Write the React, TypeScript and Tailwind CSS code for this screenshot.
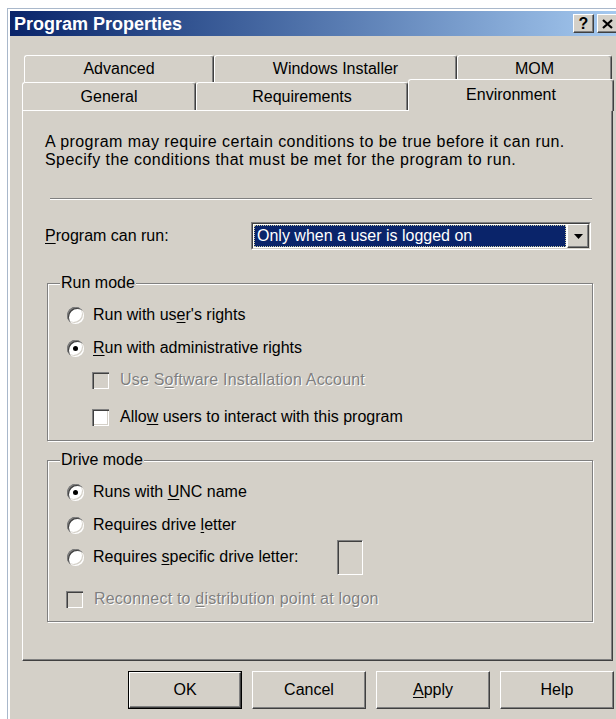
import React from "react";

// Classic 3D bevels used throughout the dialog
const raised =
  "border border-t-white border-l-white border-r-[#404040] border-b-[#404040] shadow-[inset_-1px_-1px_0_#808080]";
const disabledText = "text-[#808080] tracking-[0.2px] [text-shadow:1px_1px_0_#fff]";

function CaptionButton({ children }: { children: React.ReactNode }) {
  return (
    <div className={`flex h-[19px] w-[21px] items-center justify-center bg-[#d4d0c8] ${raised}`}>
      {children}
    </div>
  );
}

function Tab({
  label,
  className,
  active,
}: {
  label: string;
  className: string;
  active?: boolean;
}) {
  return (
    <div
      className={`flex shrink-0 items-center justify-center rounded-t-[3px] border-l border-t border-r border-l-white border-t-white border-r-[#404040] bg-[#d4d0c8] shadow-[inset_-1px_0_0_#808080] ${
        active ? "relative z-10 self-start" : ""
      } ${className}`}
    >
      {label}
    </div>
  );
}

function Radio({ checked }: { checked?: boolean }) {
  return (
    <span className="flex h-[17px] w-[17px] shrink-0 items-center justify-center rounded-full bg-white shadow-[inset_1px_1px_0_#808080,inset_2px_2px_0_#404040,inset_-1px_-1px_0_#fff,inset_-2px_-2px_0_#d4d0c8]">
      {checked && <span className="h-[5px] w-[5px] rounded-full bg-black" />}
    </span>
  );
}

function Check({ disabled }: { disabled?: boolean }) {
  return (
    <span
      className={`h-[17px] w-[17px] shrink-0 shadow-[inset_1px_1px_0_#808080,inset_2px_2px_0_#404040,inset_-1px_-1px_0_#fff,inset_-2px_-2px_0_#d4d0c8] ${
        disabled ? "bg-[#d4d0c8]" : "bg-white"
      }`}
    />
  );
}

function GroupBox({
  title,
  className,
  children,
}: {
  title: string;
  className: string;
  children: React.ReactNode;
}) {
  return (
    <div
      className={`ml-[2px] w-[546px] border border-[#808080] shadow-[inset_1px_1px_0_#fff,1px_1px_0_#fff] ${className}`}
    >
      <div className="-mt-[10px] ml-[12px] w-fit bg-[#d4d0c8] px-[1px] leading-[18px]">{title}</div>
      {children}
    </div>
  );
}

function Button({ children, isDefault }: { children: React.ReactNode; isDefault?: boolean }) {
  const face = (
    <div className={`flex h-full w-full items-center justify-center bg-[#d4d0c8] ${raised}`}>
      {children}
    </div>
  );
  return isDefault ? (
    <div className="h-[38px] w-[114px] border border-black">{face}</div>
  ) : (
    <div className="h-[38px] w-[114px]">{face}</div>
  );
}

export default function App() {
  return (
    <div className="h-[719px] w-[616px] overflow-hidden bg-white pl-[7px] pt-[8px] font-['Liberation_Sans',Arial,sans-serif] text-[16px] text-black">
      <div className="h-[720px] w-[617px] border-l border-t border-[#a9b8cb] bg-[#d4d0c8] shadow-[inset_1px_1px_0_#fff,inset_2px_2px_0_#fff]">
        <div className="pl-[2px] pr-[4px] pt-[2px]">
          {/* caption bar */}
          <div className="flex h-[25px] items-center bg-gradient-to-r from-[#0a246a] to-[#a6caf0] pl-[4px] pr-[2px]">
            <span className="text-[18px] font-bold leading-none text-white">Program Properties</span>
            <div className="ml-auto flex gap-[3px]">
              <CaptionButton>
                <span className="text-[16px] font-bold leading-none">?</span>
              </CaptionButton>
              <CaptionButton>
                <svg width="11" height="10" viewBox="0 0 11 10">
                  <path d="M1 1 L10 9 M10 1 L1 9" stroke="#000" strokeWidth="2.2" />
                </svg>
              </CaptionButton>
            </div>
          </div>

          <div className="pl-[12px] pt-[19px]">
            {/* tab rows */}
            <div className="ml-[2px] flex h-[27px]">
              <Tab label="Advanced" className="h-[27px] w-[190px]" />
              <Tab label="Windows Installer" className="h-[27px] w-[243px]" />
              <Tab label="MOM" className="h-[27px] w-[155px]" />
            </div>
            <div className="-mt-[3px] flex h-[31px] items-end">
              <Tab label="General" className="h-[28px] w-[174px]" />
              <Tab label="Requirements" className="h-[28px] w-[212px]" />
              <Tab label="Environment" className="h-[32px] w-[206px] pb-[2px]" active />
            </div>

            {/* tab page */}
            <div className="h-[551px] w-[591px] border border-white border-r-[#404040] border-b-[#404040] shadow-[inset_-1px_-1px_0_#808080]">
              <div className="pl-[22px] pt-[22px]">
                <p className="leading-[18px] tracking-[0.45px]">
                  A program may require certain conditions to be true before it can run.
                  <br />
                  Specify the conditions that must be met for the program to run.
                </p>

                <div className="ml-[5px] mt-[29px] h-[2px] w-[542px] border-t border-b border-t-[#808080] border-b-white" />

                <div className="mt-[22px] flex h-[28px] items-center">
                  <span className="w-[206px]">
                    <u className="underline-offset-2">P</u>rogram can run:
                  </span>
                  <div className="flex h-[28px] w-[340px] border border-t-[#808080] border-l-[#808080] border-r-white border-b-white">
                    <div className="flex flex-1 border border-t-[#404040] border-l-[#404040] border-r-[#d4d0c8] border-b-[#d4d0c8] bg-white">
                      <div className="m-[1px] flex flex-1 items-center border border-dotted border-[#c8c8a0] bg-[#0a246a] pl-[2px] leading-none text-white">
                        Only when a user is logged on
                      </div>
                      <div className={`flex w-[22px] items-center justify-center bg-[#d4d0c8] ${raised}`}>
                        <svg width="9" height="5" viewBox="0 0 9 5">
                          <path d="M0 0 H9 L4.5 5 Z" fill="#000" />
                        </svg>
                      </div>
                    </div>
                  </div>
                </div>

                <GroupBox title="Run mode" className="mt-[33px] h-[158px]">
                  <div className="mt-[11px] flex h-[24px] items-center gap-[9px] pl-[19px]">
                    <Radio />
                    <span>
                      Run with us<u className="underline-offset-2">e</u>r's rights
                    </span>
                  </div>
                  <div className="mt-[9px] flex h-[24px] items-center gap-[9px] pl-[19px]">
                    <Radio checked />
                    <span>
                      <u className="underline-offset-2">R</u>un with administrative rights
                    </span>
                  </div>
                  <div className="mt-[8px] flex h-[24px] items-center gap-[11px] pl-[44px]">
                    <Check disabled />
                    <span className={disabledText}>
                      Use S<u className="underline-offset-2">o</u>ftware Installation Account
                    </span>
                  </div>
                  <div className="mt-[13px] flex h-[24px] items-center gap-[11px] pl-[44px]">
                    <Check />
                    <span>
                      Allo<u className="underline-offset-2">w</u> users to interact with this program
                    </span>
                  </div>
                </GroupBox>

                <GroupBox title="Drive mode" className="mt-[19px] h-[162px]">
                  <div className="mt-[11px] flex h-[24px] items-center gap-[9px] pl-[19px]">
                    <Radio checked />
                    <span>
                      Runs with <u className="underline-offset-2">U</u>NC name
                    </span>
                  </div>
                  <div className="mt-[9px] flex h-[24px] items-center gap-[9px] pl-[19px]">
                    <Radio />
                    <span>
                      Requires drive <u className="underline-offset-2">l</u>etter
                    </span>
                  </div>
                  <div className="mt-[8px] flex h-[24px] items-center gap-[9px] pl-[19px]">
                    <Radio />
                    <span className="w-[244px]">
                      Requires <u className="underline-offset-2">s</u>pecific drive letter:
                    </span>
                    <div className="-ml-[9px] h-[35px] w-[26px] shrink-0 border border-t-[#808080] border-l-[#808080] border-r-white border-b-white bg-[#d4d0c8] shadow-[inset_1px_1px_0_#404040]" />
                  </div>
                  <div className="mt-[18px] flex h-[24px] items-center gap-[11px] pl-[18px]">
                    <Check disabled />
                    <span className={disabledText}>
                      Reconnect to <u className="underline-offset-2">d</u>istribution point at logon
                    </span>
                  </div>
                </GroupBox>
              </div>
            </div>

            {/* dialog buttons */}
            <div className="ml-[106px] mt-[10px] flex gap-[10px]">
              <Button isDefault>OK</Button>
              <Button>Cancel</Button>
              <Button>
                <span>
                  <u className="underline-offset-2">A</u>pply
                </span>
              </Button>
              <Button>Help</Button>
            </div>
          </div>
        </div>
      </div>
    </div>
  );
}
